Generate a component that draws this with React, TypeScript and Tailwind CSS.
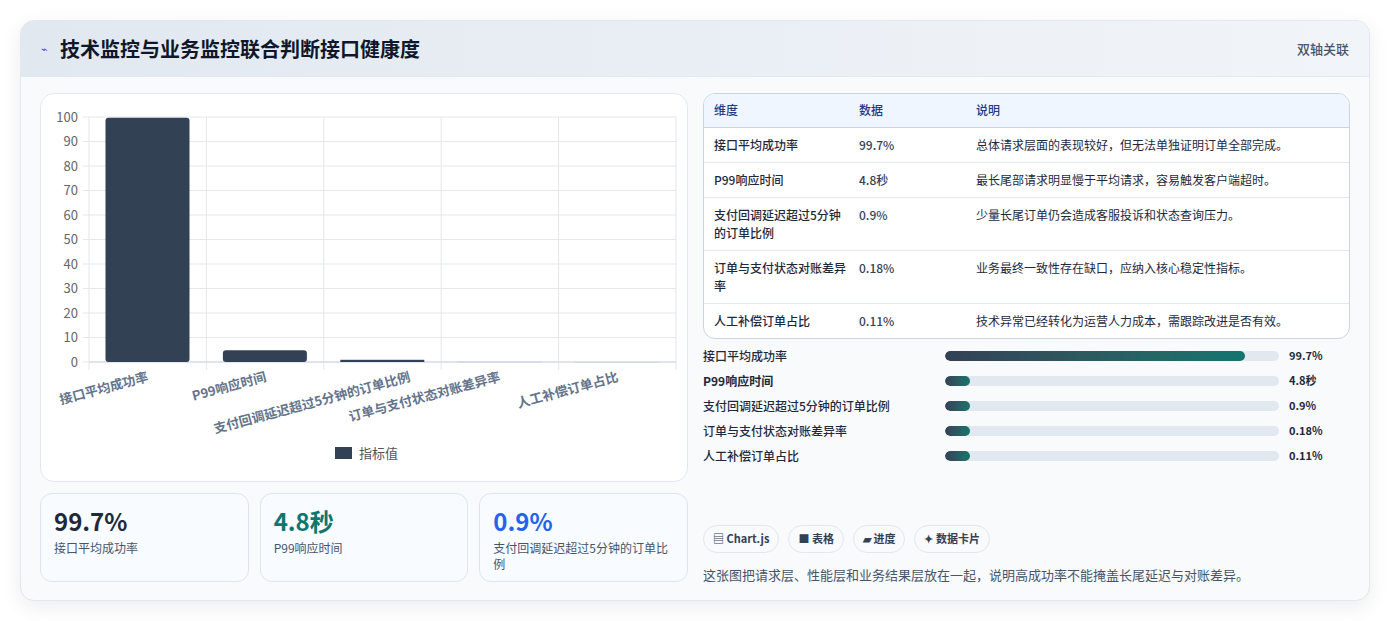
import React from 'react';

const font = { fontFamily: '"Noto Sans CJK SC", "Noto Sans", sans-serif' };

const rows = [
  { name: '接口平均成功率', value: '99.7%', note: '总体请求层面的表现较好，但无法单独证明订单全部完成。', pct: 99.7 },
  { name: 'P99响应时间', value: '4.8秒', note: '最长尾部请求明显慢于平均请求，容易触发客户端超时。', pct: 4.8 },
  { name: '支付回调延迟超过5分钟的订单比例', value: '0.9%', note: '少量长尾订单仍会造成客服投诉和状态查询压力。', pct: 0.9 },
  { name: '订单与支付状态对账差异率', value: '0.18%', note: '业务最终一致性存在缺口，应纳入核心稳定性指标。', pct: 0.18 },
  { name: '人工补偿订单占比', value: '0.11%', note: '技术异常已经转化为运营人力成本，需跟踪改进是否有效。', pct: 0.11 },
];

function Chart() {
  const left = 48;
  const top = 22;
  const w = 587;
  const h = 245;
  const cw = w / 5;
  const labelEnds = [108, 226, 370, 460, 578];
  return (
    <svg width="646" height="384" className="block">
      {Array.from({ length: 11 }).map((_, i) => {
        const y = top + (h * i) / 10;
        return (
          <g key={i}>
            <line x1={left - 6} x2={left + w} y1={y} y2={y} stroke="#e5e7eb" />
            <text x={left - 11} y={y + 4.5} textAnchor="end" fontSize="13" fill="#666">
              {100 - i * 10}
            </text>
          </g>
        );
      })}
      {Array.from({ length: 6 }).map((_, i) => (
        <line key={i} x1={left + cw * i} x2={left + cw * i} y1={top} y2={top + h + 8} stroke="#e5e7eb" />
      ))}
      <line x1={left} x2={left + w} y1={top + h} y2={top + h} stroke="#cbd5e1" />
      {rows.map((r, i) => {
        const bh = (h * r.pct) / 100;
        const x = left + cw * i + 16.5;
        return (
          <rect key={i} x={x} y={top + h - bh} width={84} height={Math.max(bh, 1)} rx={bh > 4 ? 3 : 0} fill={i < 3 ? '#334155' : '#cbd5e1'} />
        );
      })}
      {rows.map((r, i) => (
        <text
          key={i}
          x={labelEnds[i]}
          y={top + h + 19}
          textAnchor="end"
          fontSize="13"
          fontWeight="600"
          fill="#64748b"
          transform={`rotate(-15 ${labelEnds[i]} ${top + h + 19})`}
        >
          {r.name}
        </text>
      ))}
      <rect x={294} y={352} width={17} height={12} fill="#334155" />
      <text x={318} y={363} fontSize="13" fill="#555">指标值</text>
    </svg>
  );
}

export default function App() {
  return (
    <div className="w-[1390px] h-[621px] bg-white pt-[20px] pl-[20px]" style={font}>
      <div className="w-[1350px] h-[581px] rounded-[14px] border border-[#e2e8f0] bg-[#f8fafc] shadow-[0_6px_20px_rgba(15,23,42,0.08)] overflow-hidden">
        <div className="h-[56px] flex items-center justify-between px-[20px] bg-gradient-to-r from-[#e2e8f0] to-[#f1f5f9] border-b border-[#e2e8f0]">
          <div className="flex items-center gap-[12px]">
            <span className="text-[#4f46e5] text-[11px]">⌁</span>
            <span className="text-[20px] font-bold text-[#0f172a]">技术监控与业务监控联合判断接口健康度</span>
          </div>
          <span className="text-[13px] text-[#475569] font-medium">双轴关联</span>
        </div>
        <div className="flex gap-[15px] px-[19px] pt-[16px]">
          <div className="w-[648px] flex flex-col gap-[11px]">
            <div className="h-[389px] rounded-[14px] border border-[#e2e8f0] bg-white pt-[1px] overflow-hidden">
              <Chart />
            </div>
            <div className="grid grid-cols-3 gap-[11px]">
              {[
                { v: '99.7%', l: '接口平均成功率', c: 'text-[#1e293b]' },
                { v: '4.8秒', l: 'P99响应时间', c: 'text-[#0f766e]' },
                { v: '0.9%', l: '支付回调延迟超过5分钟的订单比例', c: 'text-[#2563eb]' },
              ].map((s) => (
                <div key={s.v} className="h-[89px] rounded-[12px] border border-[#dbe5f0] bg-[#f8fbff] px-[13px] pt-[10px]">
                  <div className={`text-[24px] font-bold leading-[34px] ${s.c}`}>{s.v}</div>
                  <div className="text-[12px] text-[#475569] leading-[16px] mt-[2px]">{s.l}</div>
                </div>
              ))}
            </div>
          </div>
          <div className="w-[648px] flex flex-col">
            <div className="rounded-[12px] border border-[#cbd5e1] bg-white overflow-hidden">
              <table className="w-full text-[12px] text-[#1e293b] border-collapse">
                <thead>
                  <tr className="bg-[#eff6ff] text-[#1e3a8a] h-[33px] border-b border-[#cbd5e1]">
                    <th className="text-left font-medium pl-[10px] w-[155px]">维度</th>
                    <th className="text-left font-medium w-[117px]">数据</th>
                    <th className="text-left font-medium">说明</th>
                  </tr>
                </thead>
                <tbody>
                  {rows.map((r, i) => (
                    <tr key={i} className={i < 4 ? 'border-b border-[#e2e8f0]' : ''}>
                      <td className="pl-[10px] pr-[8px] py-[8px] align-top leading-[18px] font-medium">{r.name}</td>
                      <td className="py-[8px] align-top leading-[18px] text-[#334155] font-medium">{r.value}</td>
                      <td className="py-[8px] align-top leading-[18px]">{r.note}</td>
                    </tr>
                  ))}
                </tbody>
              </table>
            </div>
            <div className="mt-[8px] flex flex-col gap-[7px]">
              {rows.map((r, i) => (
                <div key={i} className="flex items-center h-[18px] text-[12px] text-[#1e293b]">
                  <span className={`w-[242px] ${i === 1 ? 'font-bold' : 'font-medium'}`}>{r.name}</span>
                  <div className="w-[334px] h-[10px] rounded-full bg-[#e2e8f0] overflow-hidden">
                    <div
                      className="h-full rounded-full bg-gradient-to-r from-[#334155] to-[#0f766e]"
                      style={{ width: `${Math.max(r.pct * 0.9, 7.5)}%` }}
                    />
                  </div>
                  <span className="ml-[10px] font-bold text-[11px]">{r.value}</span>
                </div>
              ))}
            </div>
            <div className="mt-[60px] flex gap-[9px] text-[11px] font-semibold text-[#334155]">
              {['▤ Chart.js', '■ 表格', '▰ 进度', '✦ 数据卡片'].map((t) => (
                <span key={t} className="h-[28px] px-[9px] flex items-center rounded-full border border-[#e2e8f0] bg-[#f8fafc]">{t}</span>
              ))}
            </div>
            <p className="mt-[12px] text-[13px] text-[#475569]">这张图把请求层、性能层和业务结果层放在一起，说明高成功率不能掩盖长尾延迟与对账差异。</p>
          </div>
        </div>
      </div>
    </div>
  );
}
